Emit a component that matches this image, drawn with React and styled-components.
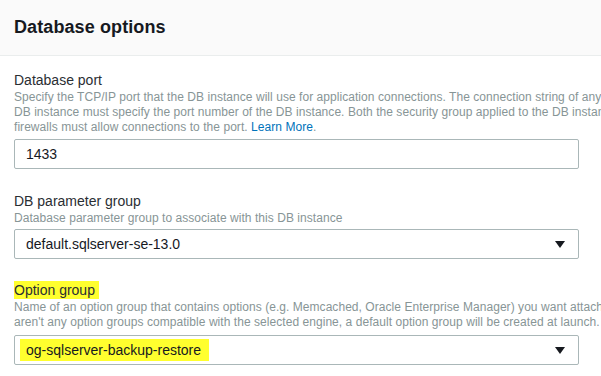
import React from "react";
import styled, { createGlobalStyle } from "styled-components";

const Global = createGlobalStyle`
  html, body { margin: 0; padding: 0; background: #ffffff; overflow: hidden; }
  body { font-family: "Liberation Sans", Arial, sans-serif; }
`;

const Panel = styled.div`
  width: 601px;
  height: 376px;
  overflow: hidden;
  background: #ffffff;
`;

const Header = styled.div`
  height: 56px;
  box-sizing: border-box;
  background: #fafafa;
  border-bottom: 1px solid #eaeded;
  display: flex;
  align-items: center;
  padding: 0 14px 1px;
`;

const Title = styled.h2`
  margin: 0;
  font-size: 18px;
  font-weight: 700;
  color: #16191f;
  letter-spacing: 0.1px;
`;

const Body = styled.div`
  padding: 14px 0 0 14px;
  width: 565px;
`;

const Field = styled.div`
  margin-bottom: ${(p) => p.$gap}px;
`;

const Label = styled.div`
  font-size: 14px;
  line-height: 20px;
  color: #2a2e33;
`;

const Mark = styled.span`
  background: #ffff2e;
  padding: 1px 4px 1px 0;
`;

const Desc = styled.div`
  font-size: 12px;
  line-height: 15px;
  color: #879596;
  white-space: nowrap;
  letter-spacing: 0.05px;
  margin-bottom: ${(p) => p.$gap}px;
`;

const Link = styled.a`
  color: #0073bb;
  text-decoration: none;
`;

const Control = styled.div`
  box-sizing: border-box;
  width: 565px;
  height: 30px;
  border: 1px solid #aab7b8;
  border-radius: 2px;
  background: #ffffff;
  display: flex;
  align-items: center;
  justify-content: space-between;
  padding: 0 13px 0 11px;
  font-size: 14px;
  color: #16191f;
`;

const Value = styled.span`
  background: ${(p) => (p.$hl ? "#ffff2e" : "transparent")};
  padding: ${(p) => (p.$hl ? "3px 8px 3px 6px" : "0")};
  margin-left: ${(p) => (p.$hl ? "-6px" : "0")};
`;

const Caret = () => (
  <svg width="10" height="7" viewBox="0 0 10 7">
    <path d="M0 0 H10 L5 7 Z" fill="#16191f" />
  </svg>
);

export default function App() {
  return (
    <>
      <Global />
      <Panel>
        <Header>
          <Title>Database options</Title>
        </Header>
        <Body>
          <Field $gap={22}>
            <Label>Database port</Label>
            <Desc $gap={4}>
              Specify the TCP/IP port that the DB instance will use for application connections. The connection string of any
              <br />
              DB instance must specify the port number of the DB instance. Both the security group applied to the DB instance and
              <br />
              firewalls must allow connections to the port. <Link href="#">Learn More</Link>.
            </Desc>
            <Control>
              <Value>1433</Value>
            </Control>
          </Field>
          <Field $gap={21}>
            <Label>DB parameter group</Label>
            <Desc $gap={3}>Database parameter group to associate with this DB instance</Desc>
            <Control>
              <Value>default.sqlserver-se-13.0</Value>
              <Caret />
            </Control>
          </Field>
          <Field $gap={0}>
            <Label>
              <Mark>Option group</Mark>
            </Label>
            <Desc $gap={5}>
              Name of an option group that contains options (e.g. Memcached, Oracle Enterprise Manager) you want attached. If there
              <br />
              aren't any option groups compatible with the selected engine, a default option group will be created at launch.
            </Desc>
            <Control>
              <Value $hl>og-sqlserver-backup-restore</Value>
              <Caret />
            </Control>
          </Field>
        </Body>
      </Panel>
    </>
  );
}
